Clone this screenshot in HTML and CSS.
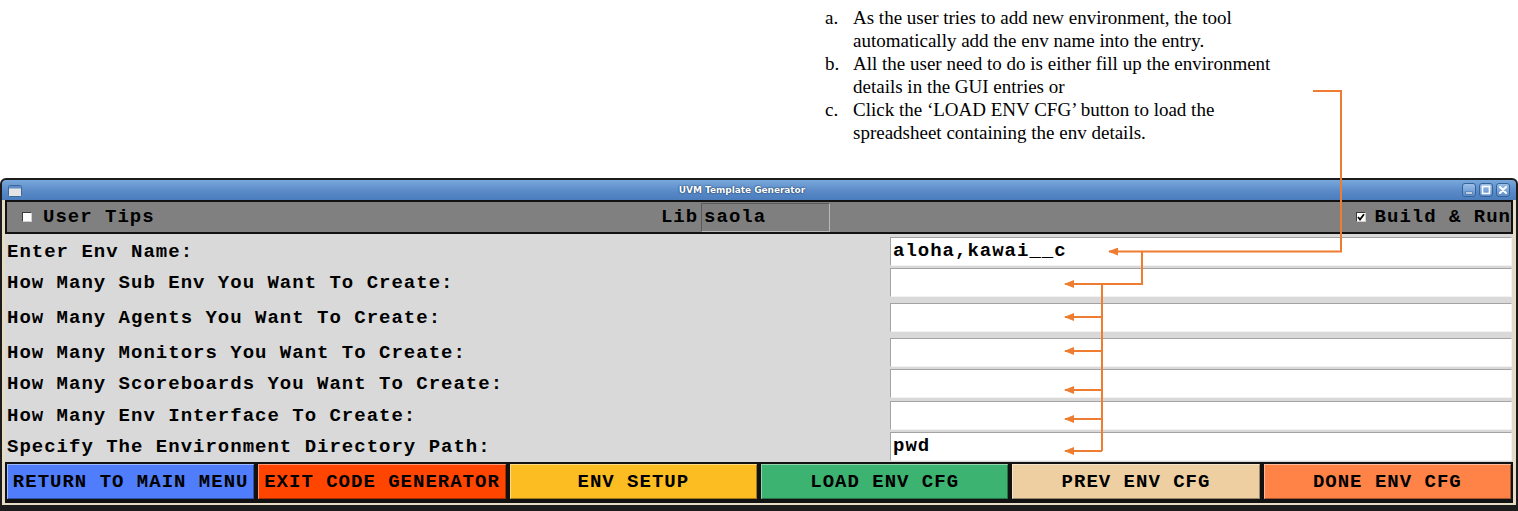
FILE: index.html
```html
<!DOCTYPE html>
<html>
<head>
<meta charset="utf-8">
<link rel="stylesheet" href="styles.css">
</head>
<body>
<div class="page">
  <div class="notes">
    <div class="note"><span class="mk">a.</span><span class="tx">As the user tries to add new environment, the tool<br>automatically add the env name into the entry.</span></div>
    <div class="note"><span class="mk">b.</span><span class="tx">All the user need to do is either fill up the environment<br>details in the GUI entries or</span></div>
    <div class="note"><span class="mk">c.</span><span class="tx">Click the ‘LOAD ENV CFG’ button to load the<br>spreadsheet containing the env details.</span></div>
  </div>

  <div class="window">
    <div class="titlebar">
      <svg class="appicon" width="14" height="12" viewBox="0 0 14 12">
        <rect x="0.5" y="0.5" width="13" height="11" rx="1" fill="#e4e4e4" stroke="#3e6799"/>
        <rect x="1" y="1" width="12" height="2.5" fill="#5d8cc8"/>
      </svg>
      <div class="title">UVM Template Generator</div>
      <div class="wbtns">
        <span class="wbtn"><svg width="12" height="12" viewBox="0 0 12 12"><rect x="2.5" y="8" width="7" height="2" fill="#fff" stroke="#2f5c94" stroke-width="0.6"/></svg></span>
        <span class="wbtn"><svg width="12" height="12" viewBox="0 0 12 12"><rect x="2.5" y="2.5" width="7" height="7" fill="none" stroke="#fff" stroke-width="1.6"/></svg></span>
        <span class="wbtn"><svg width="12" height="12" viewBox="0 0 12 12"><path d="M3 3 L9 9 M9 3 L3 9" stroke="#fff" stroke-width="2" stroke-linecap="round"/></svg></span>
      </div>
    </div>
    <div class="client">
      <div class="toolbar">
        <div class="tgroup left">
          <span class="box"></span><span class="ttext">User Tips</span>
        </div>
        <div class="lib">
          <span class="ttext">Lib</span><span class="libentry">saola</span>
        </div>
        <div class="tgroup right">
          <span class="box"><svg width="8" height="8" viewBox="0 0 8 8"><path d="M1 4 L3 6.5 L7 1.2" fill="none" stroke="#000" stroke-width="1.8"/></svg></span><span class="ttext">Build &amp; Run</span>
        </div>
      </div>

      <div class="form">
        <div class="row"><div class="lbl">Enter Env Name:</div><div class="entry">aloha,kawai__c</div></div>
        <div class="row"><div class="lbl">How Many Sub Env You Want To Create:</div><div class="entry"></div></div>
        <div class="row"><div class="lbl">How Many Agents You Want To Create:</div><div class="entry"></div></div>
        <div class="row"><div class="lbl">How Many Monitors You Want To Create:</div><div class="entry"></div></div>
        <div class="row"><div class="lbl">How Many Scoreboards You Want To Create:</div><div class="entry"></div></div>
        <div class="row"><div class="lbl">How Many Env Interface To Create:</div><div class="entry"></div></div>
        <div class="row"><div class="lbl">Specify The Environment Directory Path:</div><div class="entry">pwd</div></div>
      </div>

      <div class="buttons">
        <div class="btn b-blue">RETURN TO MAIN MENU</div>
        <div class="btn b-red">EXIT CODE GENERATOR</div>
        <div class="btn b-gold">ENV SETUP</div>
        <div class="btn b-green">LOAD ENV CFG</div>
        <div class="btn b-wheat">PREV ENV CFG</div>
        <div class="btn b-orange">DONE ENV CFG</div>
      </div>
    </div>
  </div>

  <svg class="arrows" width="1518" height="511" viewBox="0 0 1518 511">
    <defs>
      <marker id="ah" markerWidth="10" markerHeight="8" refX="9" refY="4" orient="auto" markerUnits="userSpaceOnUse">
        <path d="M0 0 L10 4 L0 8 Z" fill="#ee7d31"/>
      </marker>
    </defs>
    <g fill="none" stroke="#ee7d31" stroke-width="2">
      <path d="M1313 91 H1341 V251.5 H1109" marker-end="url(#ah)"/>
      <path d="M1142 251.5 V284 H1065" marker-end="url(#ah)"/>
      <path d="M1102 284 V451"/>
      <path d="M1102 317 H1065" marker-end="url(#ah)"/>
      <path d="M1102 351 H1065" marker-end="url(#ah)"/>
      <path d="M1102 390 H1065" marker-end="url(#ah)"/>
      <path d="M1102 419 H1065" marker-end="url(#ah)"/>
      <path d="M1102 451 H1065" marker-end="url(#ah)"/>
    </g>
  </svg>
</div>
</body>
</html>
```

FILE: styles.css
```css
* { box-sizing: border-box; }
html, body { margin: 0; padding: 0; background: #ffffff; }
body { width: 1518px; height: 511px; overflow: hidden; }

.page { position: relative; width: 1518px; height: 511px; }

/* Annotation notes */
.notes {
  height: 178px;
  padding: 6px 0 0 825px;
  font-family: "Liberation Serif", "Times New Roman", serif;
  font-size: 19px;
  line-height: 23px;
  color: #000;
}
.note { display: flex; }
.mk { width: 28px; flex: none; }
.tx { flex: none; }

/* Window */
.window {
  width: 1518px;
  background: #1c1c1c;
  border: 2px solid #1c1c1c;
  border-bottom-width: 6px;
  border-radius: 6px 6px 0 0;
  display: flex;
  flex-direction: column;
}
.titlebar {
  height: 20px;
  flex: none;
  display: flex;
  align-items: center;
  padding: 0 6px 0 6px;
  background: linear-gradient(#79a8dc, #5888c6 60%, #4b7cbc);
  border-radius: 4px 4px 0 0;
}
.appicon { flex: none; display: block; margin-top: 1px; }
.title {
  flex: 1;
  text-align: center;
  color: #fff;
  font-family: "DejaVu Sans", sans-serif;
  font-weight: bold;
  font-size: 9px;
  letter-spacing: -0.05px;
  text-shadow: 0 0 2px #1f3f66, 0 0 1px #1f3f66;
}
.wbtns { display: flex; gap: 3px; flex: none; }
.wbtn {
  width: 14px;
  height: 14px;
  border: 1px solid #35649c;
  border-radius: 3px;
  background: linear-gradient(#9cc0e8, #5d8dc9);
  display: flex;
  align-items: center;
  justify-content: center;
}
.wbtn svg { display: block; }

.client {
  background: #e6dcc4;
  padding: 0 3px 2px 3px;
  display: flex;
  flex-direction: column;
}

/* Toolbar */
.toolbar {
  height: 34px;
  flex: none;
  border: 2px solid #111;
  background: #808080;
  display: flex;
  align-items: center;
  font-family: "Liberation Mono", "Courier New", monospace;
  font-weight: bold;
  font-size: 19px;
  letter-spacing: 1px;
  color: #000;
}
.tgroup { flex: 1; display: flex; align-items: center; }
.tgroup.left { padding-left: 15px; gap: 11px; }
.tgroup.right { justify-content: flex-end; gap: 9px; padding-right: 0; }
.box {
  width: 10px;
  height: 10px;
  background: #fff;
  border: 1px solid;
  border-color: #3a3a3a #cfcfcf #cfcfcf #3a3a3a;
  display: flex;
  align-items: center;
  justify-content: center;
}
.box svg { display: block; }
.lib { display: flex; align-items: center; gap: 3px; margin-right: 42px; }
.libentry {
  width: 129px;
  height: 29px;
  border: 1px solid;
  border-color: #5a5a5a #b8b8b8 #b8b8b8 #5a5a5a;
  background: #7f7f7f;
  padding-left: 2px;
  line-height: 26px;
}

/* Form */
.form {
  background: #d9d9d9;
  padding: 0 1px 1px 2px;
  font-family: "Liberation Mono", "Courier New", monospace;
  font-weight: bold;
  font-size: 19px;
  letter-spacing: 1px;
  color: #000;
}
.row {
  display: grid;
  grid-template-columns: 883px 1fr;
  align-items: center;
  margin-top: 3px;
}
.row:nth-child(2) { margin-top: 2px; }
.row:nth-child(3) { margin-top: 6px; }
.row:nth-child(4) { margin-top: 6px; }
.row:nth-child(5) { margin-top: 2px; }
.row:nth-child(6) { margin-top: 3px; }
.row:nth-child(7) { margin-top: 2px; }
.lbl { white-space: nowrap; }
.entry {
  height: 29px;
  background: #fff;
  border: 1px solid;
  border-color: #a3a3a3 #f2f2f2 #f2f2f2 #a3a3a3;
  padding-left: 2px;
  line-height: 27px;
  white-space: nowrap;
}

/* Buttons */
.buttons {
  background: #121212;
  padding: 2px 2px 4px 2px;
  display: grid;
  grid-template-columns: repeat(6, 1fr);
  gap: 4px;
}
.btn {
  height: 35px;
  display: flex;
  align-items: center;
  justify-content: center;
  font-family: "Liberation Mono", "Courier New", monospace;
  font-weight: bold;
  font-size: 19px;
  letter-spacing: 1px;
  color: #000;
  white-space: nowrap;
  box-shadow: inset 1px 1px 0 rgba(255,255,255,0.45), inset -1px -1px 0 rgba(0,0,0,0.35);
}
.b-blue { background: #4f7dfb; }
.b-red { background: #ff4500; }
.b-gold { background: #fbbd22; }
.b-green { background: #3cb371; }
.b-wheat { background: #eecfa1; }
.b-orange { background: #ff8247; }

/* Annotation arrows overlay */
.arrows { position: absolute; left: 0; top: 0; pointer-events: none; }
```
